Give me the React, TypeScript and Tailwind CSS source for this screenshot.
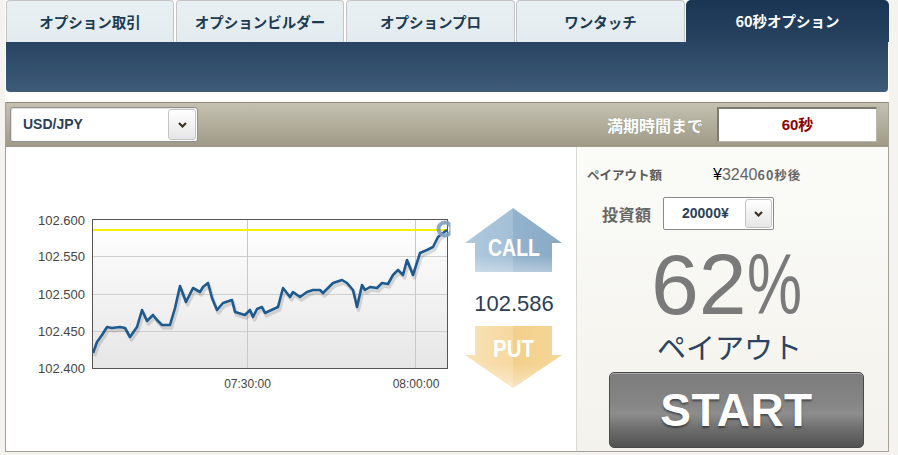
import React from "react";

const linePts =
  "93,353 97,342 102,335 107,327 112,328 120,327 125,328 130,337 137,327 142,310 147,321 153,315 157,320 162,325 170,325 175,308 180,286 186,302 193,288 200,292 203,287 208,283 212,298 217,310 223,303 232,300 235,312 245,315 250,310 253,317 257,309 262,307 265,313 278,307 283,288 290,297 293,292 300,297 307,292 313,290 320,290 323,293 333,283 342,280 347,283 353,290 357,307 362,285 365,290 370,287 377,288 382,283 388,284 393,275 398,270 403,275 407,260 413,275 420,253 427,250 433,247 438,237 443,233 447,230";

function Chevron() {
  return (
    <svg width="9" height="6" viewBox="0 0 9 6">
      <path d="M1 1 L4.5 4.5 L8 1" fill="none" stroke="#3b3222" strokeWidth="2.2" />
    </svg>
  );
}

function Chart() {
  const yLabels = [
    { t: "102.600", y: 220 },
    { t: "102.550", y: 256 },
    { t: "102.500", y: 294 },
    { t: "102.450", y: 331 },
    { t: "102.400", y: 368 },
  ];
  return (
    <svg width="449" height="200" viewBox="6 200 449 200" className="block shrink-0">
      <defs>
        <linearGradient id="plotbg" x1="0" y1="0" x2="0" y2="1">
          <stop offset="0" stopColor="#ffffff" />
          <stop offset="1" stopColor="#e6e6e6" />
        </linearGradient>
        <clipPath id="plotclip">
          <rect x="6" y="200" width="444.5" height="200" />
        </clipPath>
      </defs>
      <rect x="92.5" y="219.5" width="355" height="149" fill="url(#plotbg)" />
      {[256, 294, 331].map((y) => (
        <line key={y} x1="93" x2="447" y1={y + 0.5} y2={y + 0.5} stroke="#cfcfcf" strokeWidth="1" />
      ))}
      {[247, 415].map((x) => (
        <line key={x} x1={x + 0.5} x2={x + 0.5} y1="220" y2="368" stroke="#c9c9c9" strokeWidth="1" />
      ))}
      <rect x="92.5" y="219.5" width="355" height="149" fill="none" stroke="#555" strokeWidth="1" />
      <line x1="93" x2="447" y1="230" y2="230" stroke="#f2f200" strokeWidth="2" />
      <polyline points={linePts} fill="none" stroke="rgba(0,0,0,0.13)" strokeWidth="3.5" transform="translate(1.5,3)" strokeLinejoin="round" />
      <polyline points={linePts} fill="none" stroke="#1f5a8f" strokeWidth="2.6" strokeLinejoin="round" />
      <g clipPath="url(#plotclip)">
        <circle cx="445" cy="229" r="6.5" fill="none" stroke="#7e9fc0" strokeOpacity="0.9" strokeWidth="4" />
      </g>
      {yLabels.map((l) => (
        <text key={l.t} x="85" y={l.y + 5} textAnchor="end" fontSize="13" fill="#444" fontFamily="Liberation Sans, sans-serif">
          {l.t}
        </text>
      ))}
      <text x="247.5" y="388" textAnchor="middle" fontSize="12" fill="#444" fontFamily="Liberation Sans, sans-serif">
        07:30:00
      </text>
      <text x="416" y="388" textAnchor="middle" fontSize="12" fill="#444" fontFamily="Liberation Sans, sans-serif">
        08:00:00
      </text>
    </svg>
  );
}

function CallArrow() {
  return (
    <svg width="100" height="66" viewBox="0 0 100 66" className="block">
      <defs>
        <linearGradient id="callg" x1="0" y1="0" x2="1" y2="0">
          <stop offset="0" stopColor="#b0cadf" />
          <stop offset="0.5" stopColor="#a3bfd6" />
          <stop offset="0.5" stopColor="#93b3cd" />
          <stop offset="1" stopColor="#88aac6" />
        </linearGradient>
        <linearGradient id="callfade" x1="0" y1="0" x2="0" y2="1">
          <stop offset="0.75" stopColor="#ffffff" stopOpacity="0" />
          <stop offset="1" stopColor="#ffffff" stopOpacity="0.35" />
        </linearGradient>
      </defs>
      <polygon points="49,2 98,37 88,37 88,66 11,66 11,37 1,37" fill="url(#callg)" />
      <polygon points="49,2 98,37 88,37 88,66 11,66 11,37 1,37" fill="url(#callfade)" />
      <text x="50" y="50" textAnchor="middle" fontSize="23" fontWeight="bold" fill="#ffffff" textLength="52" lengthAdjust="spacingAndGlyphs" fontFamily="Liberation Sans, sans-serif">
        CALL
      </text>
    </svg>
  );
}

function PutArrow() {
  return (
    <svg width="100" height="65" viewBox="0 0 100 65" className="block">
      <defs>
        <linearGradient id="putg" x1="0" y1="0" x2="1" y2="0">
          <stop offset="0" stopColor="#f8e2b6" />
          <stop offset="0.5" stopColor="#f6d8a0" />
          <stop offset="0.5" stopColor="#f3cf8c" />
          <stop offset="1" stopColor="#f6d796" />
        </linearGradient>
        <linearGradient id="putfade" x1="0" y1="0" x2="0" y2="1">
          <stop offset="0.6" stopColor="#ffffff" stopOpacity="0" />
          <stop offset="1" stopColor="#ffffff" stopOpacity="0.45" />
        </linearGradient>
      </defs>
      <polygon points="11,1 88,1 88,30 98,30 49,63 1,30 11,30" fill="url(#putg)" />
      <polygon points="11,1 88,1 88,30 98,30 49,63 1,30 11,30" fill="url(#putfade)" />
      <text x="49.5" y="32" textAnchor="middle" fontSize="23" fontWeight="bold" fill="#ffffff" textLength="41" lengthAdjust="spacingAndGlyphs" fontFamily="Liberation Sans, sans-serif">
        PUT
      </text>
    </svg>
  );
}

export default function App() {
  const tabs = [
    { t: "オプション取引", w: "w-[168px]", mr: "mr-[2px]" },
    { t: "オプションビルダー", w: "w-[168px]", mr: "mr-[2px]" },
    { t: "オプションプロ", w: "w-[169px]", mr: "mr-[1px]" },
    { t: "ワンタッチ", w: "w-[169px]", mr: "mr-[1px]" },
  ];
  return (
    <div className="w-[898px] h-[455px] overflow-hidden bg-[#f4f3ef] pl-[5px] font-['Liberation_Sans','Noto_Sans_CJK_JP',sans-serif]">
      <div className="w-[884px] h-[452px] bg-white flex flex-col">
        {/* tabs */}
        <div className="h-[42px] flex pl-px shrink-0">
          {tabs.map((tb) => (
            <div
              key={tb.t}
              className={`${tb.w} ${tb.mr} h-[42px] rounded-t-[4px] border border-b-0 border-[#c4c4c4] bg-gradient-to-b from-[#e9f0f3] to-[#e2ebef] flex items-center justify-center text-[14.5px] font-bold text-[#1c3a52] font-['Noto_Sans_CJK_JP',sans-serif]`}
            >
              {tb.t}
            </div>
          ))}
          <div className="flex-1 h-[42px] rounded-t-[5px] bg-gradient-to-b from-[#1a3554] to-[#27435f] flex items-center justify-center text-[14.5px] font-bold text-white font-['Noto_Sans_CJK_JP',sans-serif]">
            60秒オプション
          </div>
        </div>
        {/* navy band */}
        <div className="h-[50px] mx-px shrink-0 rounded-b-[4px] bg-gradient-to-b from-[#284462] to-[#3e5b78]" />
        <div className="h-[10px] shrink-0" />
        {/* main panel */}
        <div className="flex-1 flex flex-col border-x border-b border-[#a4a296]">
          {/* header */}
          <div className="h-[45px] shrink-0 border-t border-[#8d8977] bg-gradient-to-b from-[#c5c1b1] to-[#9f9a87] flex items-start pt-[4px]">
            <div className="ml-[4px] w-[188px] h-[35px] bg-white border border-[#8f8f8f] rounded-[3px] flex items-center shadow-[inset_1px_1px_1px_rgba(0,0,0,0.12)]">
              <span className="pl-[12px] flex-1 font-bold text-[14px] text-[#2b3f57]">USD/JPY</span>
              <div className="w-[28px] h-[31px] mr-[1px] rounded-[3px] border border-[#c4c4c4] bg-gradient-to-b from-white to-[#e6e6e6] flex items-center justify-center">
                <Chevron />
              </div>
            </div>
            <div className="ml-auto h-[35px] flex items-center text-[16px] font-bold text-white font-['Noto_Sans_CJK_JP',sans-serif] [text-shadow:0_0_1px_rgba(0,0,0,0.25)]">
              満期時間まで
            </div>
            <div className="ml-[14px] mr-[11px] w-[160px] h-[35px] bg-white border-t-2 border-l-2 border-r border-b border-t-[#7d7b70] border-l-[#7d7b70] border-r-[#b9b7ab] border-b-[#b9b7ab] flex items-center justify-center font-bold text-[15px] text-[#8a0000]">
              60秒
            </div>
          </div>
          {/* body */}
          <div className="flex-1 flex">
            {/* left chart area */}
            <div className="w-[570px] flex items-start">
              <div className="mt-[53px]">
                <Chart />
              </div>
              <div className="ml-[9px] mt-[59px] w-[100px] flex flex-col items-center">
                <CallArrow />
                <div className="mt-[19px] h-[26px] leading-[26px] text-[22px] text-[#2b3f55]">102.586</div>
                <div className="mt-[8px]">
                  <PutArrow />
                </div>
              </div>
            </div>
            {/* right panel */}
            <div className="flex-1 border-l border-[#d9d9d6] bg-gradient-to-b from-[#fbfbf8] to-[#f3f2ec] flex flex-col">
              <div className="mt-[18px] h-[20px] flex items-center">
                <div className="ml-[10px] w-[126px] text-[12.5px] font-bold text-[#5c5c5c] font-['Noto_Sans_CJK_JP',sans-serif]">
                  ペイアウト額
                </div>
                <div className="flex items-baseline">
                  <span className="text-[16px] text-black">¥</span>
                  <span className="text-[16px] text-[#666]">3240</span>
                  <span className="text-[12.5px] font-bold text-[#666] tracking-[1px] font-['Noto_Sans_CJK_JP',sans-serif]">60秒後</span>
                </div>
              </div>
              <div className="mt-[12px] h-[33px] flex items-center">
                <div className="ml-[25px] w-[61px] text-[16px] font-bold text-[#666] tracking-[0.5px] font-['Noto_Sans_CJK_JP',sans-serif]">
                  投資額
                </div>
                <div className="w-[111px] h-[33px] bg-white border border-[#8a8a8a] rounded-[2px] flex items-center">
                  <span className="pl-[18px] flex-1 font-bold text-[14px] text-[#2b3f57]">20000¥</span>
                  <div className="w-[27px] h-[29px] mr-[1px] rounded-[3px] border border-[#c4c4c4] bg-gradient-to-b from-white to-[#e6e6e6] flex items-center justify-center">
                    <Chevron />
                  </div>
                </div>
              </div>
              <div className="mt-[11px] ml-[74px] h-[86px] leading-[86px] text-[86px] text-[#7a7a7a] whitespace-nowrap">
                62
                <span className="inline-block w-[55px]">
                  <span className="inline-block origin-left scale-x-[0.72]">%</span>
                </span>
              </div>
              <div className="mt-[5px] ml-[80px] h-[29px] leading-[29px] text-[29px] text-[#2c4360] font-['Noto_Sans_CJK_JP',sans-serif] whitespace-nowrap">
                ペイアウト
              </div>
              <div className="mt-[11px] ml-[32px] w-[255px] h-[76px] rounded-[5px] border border-[#4a4a4a] bg-[linear-gradient(to_bottom,#7c7c7c_0%,#858585_40%,#8d8d8d_55%,#6e6e6e_75%,#525252_100%)] shadow-[inset_0_1px_0_rgba(255,255,255,0.35)] flex items-center justify-center">
                <span className="text-[46px] font-bold text-white tracking-[0.5px] [text-shadow:0_2px_2px_rgba(0,0,0,0.45)]">
                  START
                </span>
              </div>
            </div>
          </div>
        </div>
      </div>
    </div>
  );
}
